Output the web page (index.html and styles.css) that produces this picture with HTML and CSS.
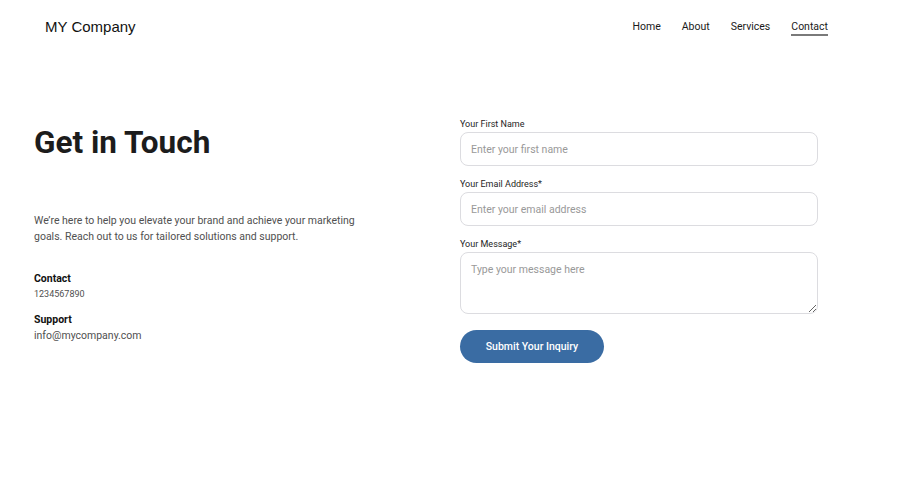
FILE: index.html
```html
<!DOCTYPE html>
<html lang="en">
<head>
    <meta charset="UTF-8">
    <meta name="viewport" content="width=device-width, initial-scale=1.0">
    <title>Contact - MY Company</title>
    <link rel="stylesheet" href="styles.css">
</head>
<body>
    <header class="site-header">
        <div class="logo">MY Company</div>
        <nav class="main-nav">
            <a href="#">Home</a>
            <a href="#">About</a>
            <a href="#">Services</a>
            <a href="#" class="active">Contact</a>
        </nav>
    </header>

    <main class="contact-section">
        <div class="contact-info">
            <h1>Get in Touch</h1>
            <p class="intro">We’re here to help you elevate your brand and achieve your marketing goals. Reach out to us for tailored solutions and support.</p>

            <div class="info-block">
                <h3>Contact</h3>
                <p class="phone">1234567890</p>
            </div>
            <div class="info-block">
                <h3>Support</h3>
                <p class="email">info@mycompany.com</p>
            </div>
        </div>

        <form class="contact-form">
            <div class="form-group">
                <label for="firstName">Your First Name</label>
                <input type="text" id="firstName" placeholder="Enter your first name">
            </div>
            <div class="form-group">
                <label for="email">Your Email Address*</label>
                <input type="email" id="email" placeholder="Enter your email address">
            </div>
            <div class="form-group">
                <label for="message">Your Message*</label>
                <textarea id="message" placeholder="Type your message here"></textarea>
            </div>
            <button type="submit">Submit Your Inquiry</button>
        </form>
    </main>
</body>
</html>
```

FILE: styles.css
```css
body {
    margin: 0;
    font-family: Roboto, "Liberation Sans", Arial, sans-serif;
    background-color: #fff;
    color: #222;
}

.site-header {
    display: flex;
    justify-content: space-between;
    align-items: center;
    height: 52px;
    padding: 0 87px 0 45px;
}

.logo {
    font-family: "Liberation Sans", Arial, sans-serif;
    font-size: 15px;
    color: #111;
}

.main-nav {
    display: flex;
    gap: 21px;
}

.main-nav a {
    display: inline-block;
    font-size: 10.5px;
    line-height: 12px;
    color: #1a1a1a;
    text-decoration: none;
    padding: 5px 0 1px;
    border-bottom: 2px solid transparent;
}

.main-nav a.active {
    border-bottom-color: #7a7a7a;
}

.contact-section {
    display: grid;
    grid-template-columns: 1fr 358px;
    padding: 66px 97px 0 34px;
}

.contact-info h1 {
    font-size: 31.5px;
    line-height: 38px;
    font-weight: 700;
    color: #1c1c1c;
    margin: 6px 0 51px;
}

.intro {
    max-width: 335px;
    font-size: 10.5px;
    line-height: 16px;
    color: #505050;
    margin: 0 0 27px;
}

.info-block {
    margin-bottom: 12px;
}

.info-block h3 {
    font-size: 10.5px;
    line-height: 14px;
    font-weight: 700;
    color: #111;
    margin: 0 0 1px;
}

.phone {
    font-size: 9px;
    line-height: 14px;
    color: #505050;
    margin: 0;
}

.email {
    font-size: 10.5px;
    line-height: 16px;
    color: #505050;
    margin: 0;
}

.form-group {
    margin-bottom: 12px;
}

.form-group label {
    display: block;
    font-size: 9px;
    line-height: 12px;
    color: #1e1e1e;
    margin-bottom: 2px;
}

.form-group input,
.form-group textarea {
    display: block;
    width: 100%;
    box-sizing: border-box;
    border: 1px solid #dcdce0;
    border-radius: 8px;
    font-family: inherit;
    font-size: 10.5px;
    padding: 0 10px;
    color: #333;
}

.form-group input {
    height: 34px;
}

.form-group textarea {
    height: 62px;
    padding-top: 10px;
    resize: vertical;
}

.form-group input::placeholder,
.form-group textarea::placeholder {
    color: #999;
}

button {
    margin-top: 4px;
    width: 144px;
    height: 33px;
    border: none;
    border-radius: 17px;
    background-color: #3a6ca3;
    color: #fff;
    font-family: inherit;
    font-size: 10.5px;
    font-weight: 500;
    cursor: pointer;
}

button:hover {
    background-color: #2f5a8a;
}
```
